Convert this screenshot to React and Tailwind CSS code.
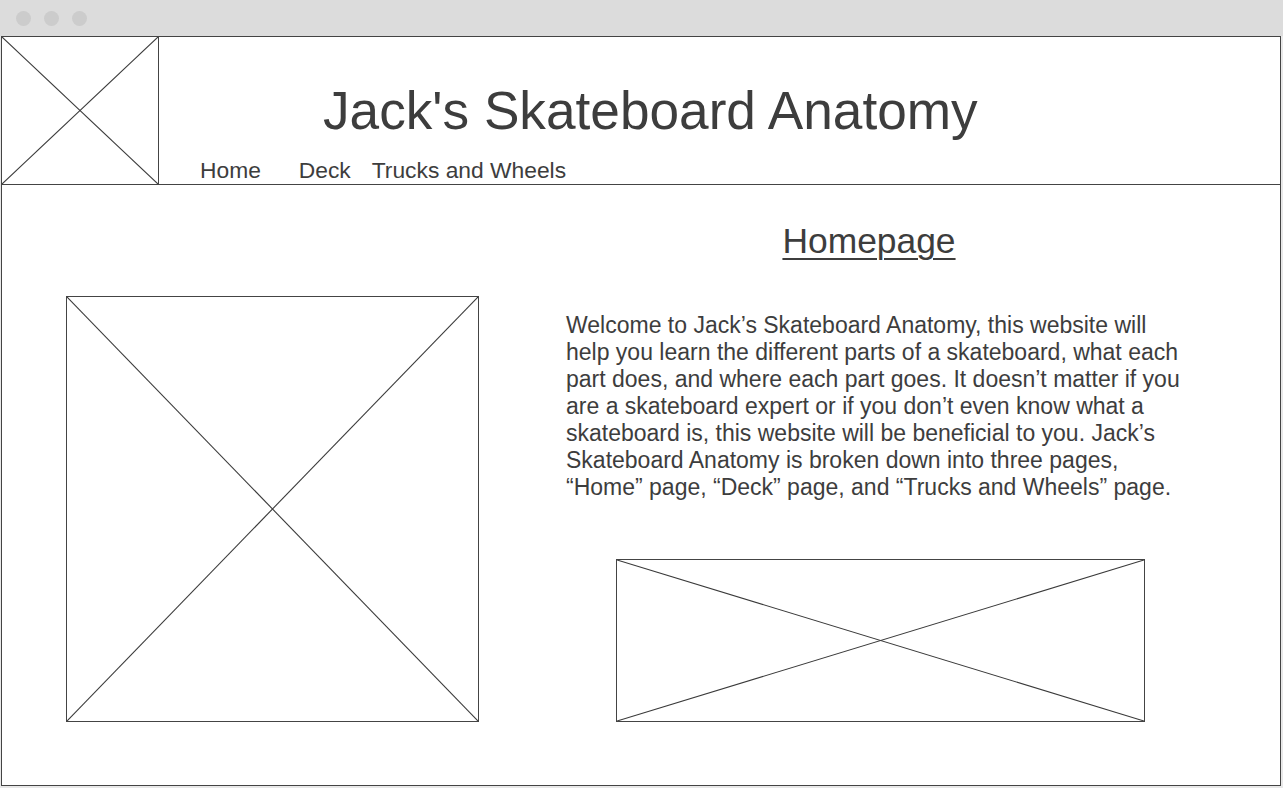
import React from 'react';

const font = { fontFamily: '"Liberation Sans", Arial, sans-serif' };

function Placeholder({ className }) {
  return (
    <div className={`relative bg-white ${className}`}>
      <svg className="absolute inset-0 w-full h-full" preserveAspectRatio="none" viewBox="0 0 100 100">
        <line x1="0" y1="0" x2="100" y2="100" stroke="#3a3a3a" strokeWidth="1.1" vectorEffect="non-scaling-stroke" />
        <line x1="100" y1="0" x2="0" y2="100" stroke="#3a3a3a" strokeWidth="1.1" vectorEffect="non-scaling-stroke" />
      </svg>
    </div>
  );
}

export default function App() {
  return (
    <div className="w-[1283px] h-[788px] bg-[#e8e8e8] overflow-hidden text-[#3d3d3d]" style={font}>
      {/* browser bar */}
      <div className="h-9 bg-[#dcdcdc] flex items-center gap-[13px] pl-4">
        <span className="w-[15px] h-[15px] rounded-full bg-[#cccccc]" />
        <span className="w-[15px] h-[15px] rounded-full bg-[#cccccc]" />
        <span className="w-[15px] h-[15px] rounded-full bg-[#cccccc]" />
      </div>

      {/* page frame */}
      <div className="ml-px w-[1280px] h-[750px] border border-[#444] bg-white flex flex-col">
        {/* header */}
        <div className="h-[148px] shrink-0 border-b border-[#444] flex">
          <Placeholder className="w-[157px] h-full border-r border-[#444]" />
          <div className="flex flex-col">
            <h1 className="pt-[48px] pl-[164px] text-[53.2px] leading-[52px] whitespace-nowrap">
              Jack's Skateboard Anatomy
            </h1>
            <nav className="mt-[22px] pl-[41px] flex text-[22.8px] leading-[22px] whitespace-nowrap">
              <span>Home</span>
              <span className="ml-[38px]">Deck</span>
              <span className="ml-[21px]">Trucks and Wheels</span>
            </nav>
          </div>
        </div>

        {/* main */}
        <div className="flex-1 flex">
          <div className="pl-[64px] pt-[111px]">
            <Placeholder className="w-[413px] h-[426px] border border-[#444]" />
          </div>
          <div className="ml-[87px] w-[606px] pt-[39px] flex flex-col">
            <h2 className="text-center text-[35.4px] leading-[35px] underline underline-offset-[5px] decoration-2">
              Homepage
            </h2>
            <p className="mt-[53px] w-[622px] text-[23px] leading-[27px]">
              Welcome to Jack’s Skateboard Anatomy, this website will help you learn the different parts of a skateboard, what each part does, and where each part goes. It doesn’t matter if you are a skateboard expert or if you don’t even know what a skateboard is, this website will be beneficial to you. Jack’s Skateboard Anatomy is broken down into three pages, “Home” page, “Deck” page, and “Trucks and Wheels” page.
            </p>
            <Placeholder className="mt-[58px] ml-[50px] w-[529px] h-[163px] border border-[#444]" />
          </div>
        </div>
      </div>
    </div>
  );
}
